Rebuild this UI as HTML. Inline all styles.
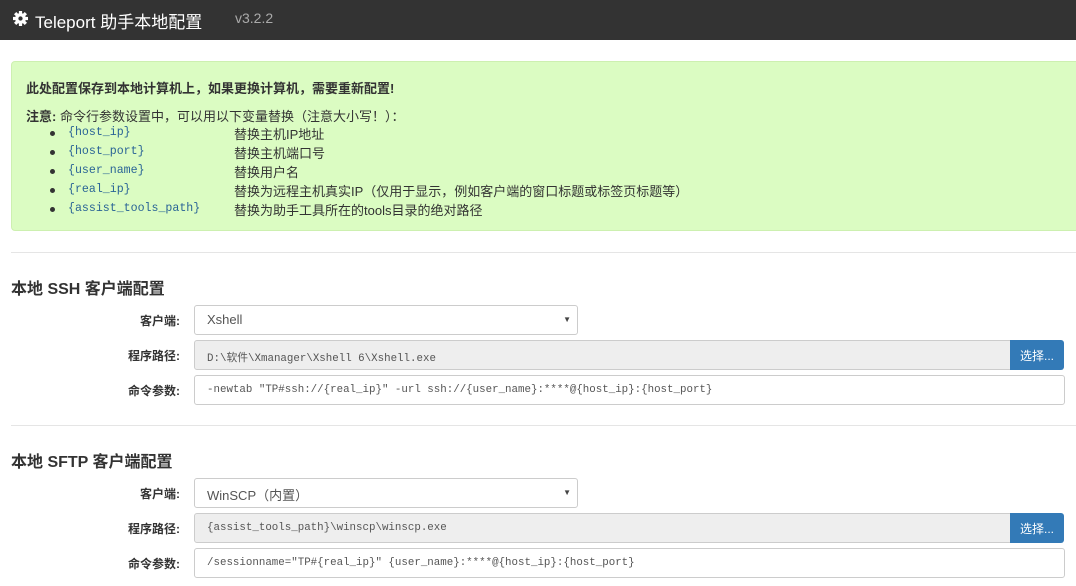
<!DOCTYPE html>
<html><head><meta charset="utf-8"><style>
*{box-sizing:border-box;margin:0;padding:0}
body{width:1076px;height:586px;overflow:hidden;background:#fff;font-family:"Liberation Sans","Noto Sans CJK SC",sans-serif;font-size:13px;color:#333;position:relative}
.hd{position:absolute;left:0;top:0;width:1076px;height:40px;background:#333;color:#fff}
.hd .t{position:absolute;left:35px;top:8px;font-size:17px}
.hd .v{position:absolute;left:235px;top:10px;font-size:14px;color:#aaa}
.hd svg{position:absolute;left:13px;top:11px}
.g{position:absolute;left:11px;top:61px;width:1075px;height:170px;background:#dbfcc2;border-radius:4px;border:1px solid #cdf0b0}
.g .b{position:absolute;left:14px;top:16px;font-weight:bold;font-size:13px}
.g .n{position:absolute;left:14px;top:44px}
.li{position:absolute;left:38px;font-size:13px;height:19px}
.li:before{content:"";position:absolute;left:0;top:6px;width:5px;height:5px;border-radius:50%;background:#333}
.li code{position:absolute;left:18px;font-family:"Liberation Mono",monospace;color:#2a6496;font-size:11.6px;top:1px;white-space:nowrap}
.li span{position:absolute;left:184px;white-space:nowrap;top:-1px}
.hr{position:absolute;left:11px;width:1065px;height:1px;background:#e5e5e5}
h3{position:absolute;left:11px;font-size:16px;font-weight:bold;color:#333}
.lb{position:absolute;width:180px;left:0;text-align:right;font-weight:bold;font-size:12px}
.in{position:absolute;left:194px;height:30px;border:1px solid #ccc;border-radius:3px;padding:8px 12px;font-size:10.8px;font-family:"Liberation Mono","Noto Sans CJK SC",monospace;color:#555;white-space:nowrap;overflow:hidden}
.sel{font-family:"Liberation Sans","Noto Sans CJK SC",sans-serif;font-size:13px;width:384px;padding-top:6px}
.sel:after{content:"▼";position:absolute;right:6px;top:9px;font-size:8px;color:#444}
.ro{background:#eee;width:817px;border-radius:3px 0 0 3px}
.bt{position:absolute;left:1010px;width:54px;height:30px;background:#337ab7;color:#fff;border-radius:0 3px 3px 0;font-size:12px;padding:7px 0 0 10px}
.cm{width:871px}
</style></head><body>
<div class="hd"><svg width="15" height="15" viewBox="0 0 14 14"><circle cx="7" cy="7" r="5" fill="#fff"/><g stroke="#fff" stroke-width="3"><line x1="7" y1="0" x2="7" y2="14"/><line x1="0" y1="7" x2="14" y2="7"/><line x1="2" y1="2" x2="12" y2="12"/><line x1="12" y1="2" x2="2" y2="12"/></g><circle cx="7" cy="7" r="2" fill="#333"/></svg><div class="t">Teleport 助手本地配置</div><div class="v">v3.2.2</div></div>
<div class="g">
<div class="b">此处配置保存到本地计算机上，如果更换计算机，需要重新配置!</div>
<div class="n"><b>注意:</b> 命令行参数设置中，可以用以下变量替换（注意大小写！）：</div>
<div class="li" style="top:63px"><code>{host_ip}</code><span>替换主机IP地址</span></div>
<div class="li" style="top:82px"><code>{host_port}</code><span>替换主机端口号</span></div>
<div class="li" style="top:101px"><code>{user_name}</code><span>替换用户名</span></div>
<div class="li" style="top:120px"><code>{real_ip}</code><span>替换为远程主机真实IP（仅用于显示，例如客户端的窗口标题或标签页标题等）</span></div>
<div class="li" style="top:139px"><code>{assist_tools_path}</code><span>替换为助手工具所在的tools目录的绝对路径</span></div>
</div>
<div class="hr" style="top:252px"></div>
<h3 style="top:275px">本地 SSH 客户端配置</h3>
<div class="lb" style="top:312px">客户端:</div><div class="in sel" style="top:305px">Xshell</div>
<div class="lb" style="top:347px">程序路径:</div><div class="in ro" style="top:340px">D:\软件\Xmanager\Xshell 6\Xshell.exe</div><div class="bt" style="top:340px">选择...</div>
<div class="lb" style="top:382px">命令参数:</div><div class="in cm" style="top:375px">-newtab "TP#ssh://{real_ip}" -url ssh://{user_name}:****@{host_ip}:{host_port}</div>
<div class="hr" style="top:425px"></div>
<h3 style="top:448px">本地 SFTP 客户端配置</h3>
<div class="lb" style="top:485px">客户端:</div><div class="in sel" style="top:478px">WinSCP（内置）</div>
<div class="lb" style="top:520px">程序路径:</div><div class="in ro" style="top:513px">{assist_tools_path}\winscp\winscp.exe</div><div class="bt" style="top:513px">选择...</div>
<div class="lb" style="top:555px">命令参数:</div><div class="in cm" style="top:548px">/sessionname="TP#{real_ip}" {user_name}:****@{host_ip}:{host_port}</div>
</body></html>
